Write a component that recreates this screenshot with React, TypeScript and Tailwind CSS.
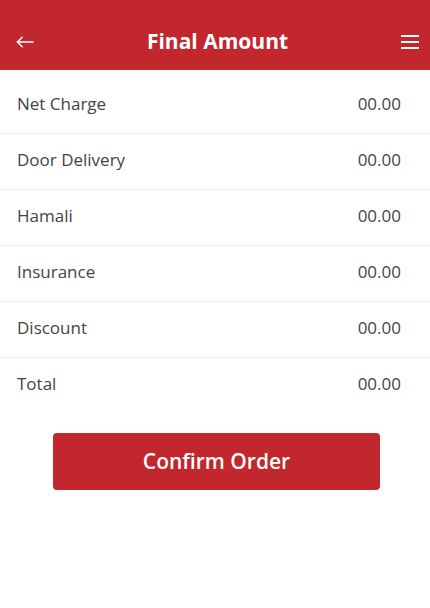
const rows = [
  { label: "Net Charge", value: "00.00" },
  { label: "Door Delivery", value: "00.00" },
  { label: "Hamali", value: "00.00" },
  { label: "Insurance", value: "00.00" },
  { label: "Discount", value: "00.00" },
  { label: "Total", value: "00.00" },
];

export default function App() {
  return (
    <div className="min-h-[608px] w-[430px] bg-white font-['Open_Sans',sans-serif]">
      {/* Header */}
      <header className="flex h-[70px] items-center justify-between bg-[#c1272d] pl-[16px] pr-[11px] pt-[13px] text-white">
        <button aria-label="Back" className="flex h-6 w-[18px] items-center justify-center">
          <svg width="19" height="12" viewBox="0 0 19 12" fill="none" stroke="currentColor" strokeWidth="1.6" strokeLinecap="round" strokeLinejoin="round">
            <path d="M18 6H1.5" />
            <path d="M6.5 1L1.5 6l5 5" />
          </svg>
        </button>
        <h1 className="text-[21px] font-bold">Final Amount</h1>
        <button aria-label="Menu" className="flex h-6 w-[18px] flex-col justify-center gap-[4px]">
          <span className="block h-[2px] w-[18px] bg-white" />
          <span className="block h-[2px] w-[18px] bg-white" />
          <span className="block h-[2px] w-[18px] bg-white" />
        </button>
      </header>

      {/* Amount rows */}
      <div className="pt-[8px]">
        {rows.map((row, i) => (
          <div
            key={row.label}
            className={`flex items-center justify-between pl-[17px] pr-[29px] pt-[14px] pb-[17px] text-[17px] leading-[24px] text-[#444] ${
              i < rows.length - 1 ? "border-b border-[#ececec]" : ""
            }`}
          >
            <span>{row.label}</span>
            <span>{row.value}</span>
          </div>
        ))}
      </div>

      {/* Confirm */}
      <div className="mt-[20px] pl-[53px]">
        <button className="flex h-[57px] w-[327px] items-center justify-center rounded-[4px] bg-[#c1272d] text-[21px] font-semibold text-white">
          Confirm Order
        </button>
      </div>
    </div>
  );
}
